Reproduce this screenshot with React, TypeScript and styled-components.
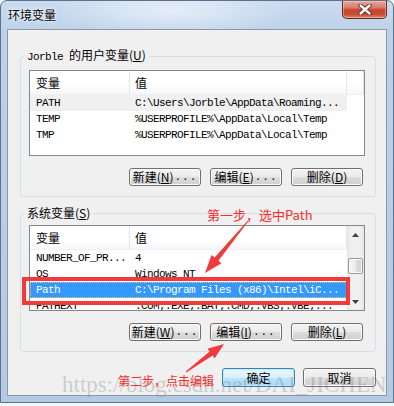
import React from "react";
import styled, { createGlobalStyle } from "styled-components";

const UI = `"Noto Sans CJK SC", "Noto Sans", sans-serif`;
const MONO = `"Liberation Mono", "Noto Sans CJK SC", monospace`;

const GlobalStyle = createGlobalStyle`
  html, body { margin: 0; padding: 0; }
  body { background: #f4f6f8; font-family: ${UI}; }
`;

const Page = styled.div`
  position: relative;
  width: 394px;
  height: 406px;
  overflow: hidden;
`;

const Window = styled.div`
  width: 394px;
  height: 403px;
  box-sizing: border-box;
  border: 1px solid #61708a;
  border-radius: 7px 7px 0 0;
  background:
    radial-gradient(ellipse 170px 40px at 170px 10px, rgba(255, 255, 255, 0.55), rgba(255, 255, 255, 0) 70%),
    linear-gradient(180deg, #cadcf0 0%, #bcd2ea 30px, #b3cae4 100%);
  display: flex;
  flex-direction: column;
  overflow: hidden;
`;

const TitleBar = styled.div`
  height: 28px;
  flex: none;
  display: flex;
  align-items: flex-start;
  padding-left: 7px;
`;

const Title = styled.div`
  font: 12px/28px ${UI};
  color: #000;
  text-shadow: 0 0 5px rgba(255, 255, 255, 0.95), 0 0 2px rgba(255, 255, 255, 0.9);
`;

const CloseButton = styled.div`
  margin-left: auto;
  margin-right: 6px;
  width: 45px;
  height: 18px;
  box-sizing: border-box;
  border: 1px solid #5e2a24;
  border-top: none;
  border-radius: 0 0 5px 5px;
  background: linear-gradient(180deg, #e7a89b 0%, #d87a68 40%, #c4462f 52%, #c94a30 78%, #e2866a 100%);
  box-shadow: inset 0 0 0 1px rgba(255, 220, 210, 0.45);
  display: flex;
  align-items: center;
  justify-content: center;
`;

const Client = styled.div`
  flex: 1;
  margin: 0 6px 6px 6px;
  background: #f0f0f0;
  border: 1px solid #8d98a5;
  padding: 18px 10px 0 12px;
  display: flex;
  flex-direction: column;
`;

const Group = styled.fieldset<{ $padTop: number }>`
  margin: 0;
  min-width: 0;
  padding: ${(p) => p.$padTop}px 10px 10px 8px;
  border: 1px solid #d5dfe5;
  border-radius: 3px;
  & + & {
    margin-top: 9px;
  }
`;

const Legend = styled.legend`
  padding: 0 3px;
  margin-left: -5px;
  font: 12px/14px ${UI};
  color: #000;
`;

const Mono = styled.span`
  font-family: ${MONO};
  font-size: 11px;
  letter-spacing: -0.6px;
`;

const Key = styled.span`
  text-decoration: underline;
  text-underline-offset: 1px;
`;

const ListBox = styled.div`
  height: 86px;
  box-sizing: border-box;
  border: 1px solid #828790;
  background: #fff;
  display: flex;
  overflow: hidden;
`;

const ListMain = styled.div`
  flex: 1;
  min-width: 0;
  display: flex;
  flex-direction: column;
`;

const Header = styled.div`
  height: 24px;
  flex: none;
  display: flex;
  box-sizing: border-box;
  background: linear-gradient(180deg, #ffffff 0%, #ffffff 55%, #f6f7f9 100%);
  border-bottom: 1px solid #eef0f3;
`;

const HeaderCell = styled.div<{ $w?: number; $pad: number }>`
  ${(p) => (p.$w ? `width: ${p.$w}px; flex: none;` : "flex: 1;")}
  box-sizing: border-box;
  padding-left: ${(p) => p.$pad}px;
  border-right: 1px solid #e5e5e5;
  font: 12px/23px ${UI};
  color: #000;
`;

const Row = styled.div<{ $state?: "hover" | "selected" }>`
  width: 317px;
  height: 16px;
  flex: none;
  display: flex;
  box-sizing: border-box;
  font-family: ${MONO};
  font-size: 11px;
  line-height: 16px;
  letter-spacing: -0.6px;
  white-space: nowrap;
  color: ${(p) => (p.$state === "selected" ? "#fff" : "#000")};
  background: ${(p) =>
    p.$state === "selected" ? "#3399ff" : p.$state === "hover" ? "#f0f0f0" : "transparent"};
  outline: ${(p) => (p.$state === "selected" ? "1px dotted #ffc266" : "none")};
  outline-offset: -1px;
`;

const Cell = styled.div<{ $w: number; $pad: number }>`
  width: ${(p) => p.$w}px;
  flex: none;
  box-sizing: border-box;
  padding-left: ${(p) => p.$pad}px;
  overflow: hidden;
`;

const ScrollBar = styled.div`
  width: 17px;
  flex: none;
  display: flex;
  flex-direction: column;
  background: linear-gradient(90deg, #e6e6e6 0%, #f0f0f0 25%, #f0f0f0 75%, #e6e6e6 100%);
`;

const ScrollArrow = styled.div`
  height: 17px;
  flex: none;
  display: flex;
  align-items: center;
  justify-content: center;
`;

const Thumb = styled.div`
  height: 16px;
  margin: 15px 1px 0 1px;
  box-sizing: border-box;
  border: 1px solid #979797;
  border-radius: 2px;
  background: linear-gradient(90deg, #f6f6f6 0%, #ececec 50%, #dcdcdc 51%, #d2d2d2 100%);
  box-shadow: inset 0 0 0 1px #fafafa;
`;

const Spacer = styled.div`
  flex: 1;
`;

const ButtonRow = styled.div<{ $top: number; $gap: number; $right: number }>`
  display: flex;
  justify-content: flex-end;
  gap: ${(p) => p.$gap}px;
  margin-top: ${(p) => p.$top}px;
  padding-right: ${(p) => p.$right}px;
`;

const Button = styled.div<{ $w: number; $h: number; $default?: boolean }>`
  width: ${(p) => p.$w}px;
  height: ${(p) => p.$h}px;
  box-sizing: border-box;
  border: 1px solid ${(p) => (p.$default ? "#3c7fb1" : "#707070")};
  border-radius: 3px;
  background: ${(p) =>
    p.$default
      ? "linear-gradient(180deg, #eaf6fd 0%, #d9f0fc 50%, #bee6fd 51%, #a7d9f5 100%)"
      : "linear-gradient(180deg, #f2f2f2 0%, #ebebeb 50%, #dddddd 51%, #cfcfcf 100%)"};
  box-shadow: inset 0 0 0 1px ${(p) => (p.$default ? "#bdeeff" : "#fcfcfc")};
  display: flex;
  align-items: center;
  justify-content: center;
  font: 12px/1 ${UI};
  color: #000;
  white-space: nowrap;
`;

const Dots = styled.span`
  font-family: ${MONO};
  font-size: 11px;
  letter-spacing: 1px;
  margin-left: 1px;
`;

const Overlay = styled.div`
  position: absolute;
  left: 0;
  top: 0;
  width: 394px;
  height: 406px;
  pointer-events: none;
`;

const Note = styled.span<{ $x: number; $y: number; $size: number }>`
  position: absolute;
  left: ${(p) => p.$x}px;
  top: ${(p) => p.$y}px;
  font: ${(p) => p.$size}px/16px ${UI};
  color: #ff2a2a;
  white-space: nowrap;
`;

const Watermark = styled.span`
  position: absolute;
  left: 62px;
  top: 373px;
  font: 23px/23px "Liberation Serif", serif;
  color: rgba(110, 110, 110, 0.28);
  white-space: nowrap;
`;

type RowData = { name: string; value: string; state?: "hover" | "selected" };

const userRows: RowData[] = [
  { name: "PATH", value: "C:\\Users\\Jorble\\AppData\\Roaming...", state: "hover" },
  { name: "TEMP", value: "%USERPROFILE%\\AppData\\Local\\Temp" },
  { name: "TMP", value: "%USERPROFILE%\\AppData\\Local\\Temp" },
];

const sysRows: RowData[] = [
  { name: "NUMBER_OF_PR...", value: "4" },
  { name: "OS", value: "Windows_NT" },
  { name: "Path", value: "C:\\Program Files (x86)\\Intel\\iC...", state: "selected" },
  { name: "PATHEXT", value: ".COM;.EXE;.BAT;.CMD;.VBS;.VBE;..." },
];

const Rows = ({ rows }: { rows: RowData[] }) => (
  <>
    {rows.map((r) => (
      <Row key={r.name} $state={r.state}>
        <Cell $w={100} $pad={6}>{r.name}</Cell>
        <Cell $w={217} $pad={5}>{r.value}</Cell>
      </Row>
    ))}
  </>
);

const Label = ({ text, k, dots }: { text: string; k?: string; dots?: boolean }) => (
  <>
    {text}
    {k && (
      <>
        (<Key>{k}</Key>)
      </>
    )}
    {dots && <Dots>...</Dots>}
  </>
);

const Arrow = ({ up }: { up?: boolean }) => (
  <svg width="7" height="4" viewBox="0 0 7 4">
    <polygon points={up ? "0,4 3.5,0 7,4" : "0,0 3.5,4 7,0"} fill="#404040" />
  </svg>
);

export default function App() {
  return (
    <Page>
      <GlobalStyle />
      <Window>
        <TitleBar>
          <Title>环境变量</Title>
          <CloseButton>
            <svg width="14" height="11" viewBox="0 0 14 11">
              <path d="M2.5 1.5 L11.5 9.5 M11.5 1.5 L2.5 9.5" stroke="#4a2420" strokeWidth="4.2" strokeLinecap="round" />
              <path d="M2.5 1.5 L11.5 9.5 M11.5 1.5 L2.5 9.5" stroke="#ffffff" strokeWidth="2.4" strokeLinecap="round" />
            </svg>
          </CloseButton>
        </TitleBar>
        <Client>
          <Group $padTop={6}>
            <Legend>
              <Mono>Jorble </Mono>的用户变量(<Key>U</Key>)
            </Legend>
            <ListBox>
              <ListMain>
                <Header>
                  <HeaderCell $w={100} $pad={6}>变量</HeaderCell>
                  <HeaderCell $w={217} $pad={5}>值</HeaderCell>
                  <HeaderCell $pad={0} />
                </Header>
                <Rows rows={userRows} />
              </ListMain>
            </ListBox>
            <ButtonRow $top={12} $gap={9} $right={2}>
              <Button $w={72} $h={18}><Label text="新建" k="N" dots /></Button>
              <Button $w={72} $h={18}><Label text="编辑" k="E" dots /></Button>
              <Button $w={72} $h={18}><Label text="删除" k="D" /></Button>
            </ButtonRow>
          </Group>
          <Group $padTop={5}>
            <Legend>
              系统变量(<Key>S</Key>)
            </Legend>
            <ListBox>
              <ListMain>
                <Header>
                  <HeaderCell $w={100} $pad={6}>变量</HeaderCell>
                  <HeaderCell $pad={5}>值</HeaderCell>
                </Header>
                <Rows rows={sysRows} />
              </ListMain>
              <ScrollBar>
                <ScrollArrow><Arrow up /></ScrollArrow>
                <Thumb />
                <Spacer />
                <ScrollArrow><Arrow /></ScrollArrow>
              </ScrollBar>
            </ListBox>
            <ButtonRow $top={12} $gap={9} $right={2}>
              <Button $w={72} $h={18}><Label text="新建" k="W" dots /></Button>
              <Button $w={72} $h={18}><Label text="编辑" k="I" dots /></Button>
              <Button $w={72} $h={18}><Label text="删除" k="L" /></Button>
            </ButtonRow>
          </Group>
          <ButtonRow $top={16} $gap={8} $right={0}>
            <Button $w={73} $h={19} $default>确定</Button>
            <Button $w={73} $h={19}>取消</Button>
          </ButtonRow>
        </Client>
      </Window>
      <Overlay>
        <svg width="394" height="406" viewBox="0 0 394 406">
          <rect x="24" y="279" width="324" height="24" fill="none" stroke="#f23a3a" strokeWidth="4" />
          <polygon
            points="248.4,221.3 247.6,220.7 214.6,257.5 211.5,255 205,273 221.5,263.2 218.4,260.7"
            fill="#f23a3a"
          />
          <polygon
            points="186.3,372.4 185.7,371.6 209.6,351.5 207.5,348.7 224,344 214.7,358.3 212.6,355.5"
            fill="#f23a3a"
          />
        </svg>
        <Note $x={207} $y={207} $size={13}>第一步，选中Path</Note>
        <Note $x={118} $y={373} $size={12}>第二步，点击编辑</Note>
        <Watermark>https://blog.csdn.net/DAI_JICHEN</Watermark>
      </Overlay>
    </Page>
  );
}
